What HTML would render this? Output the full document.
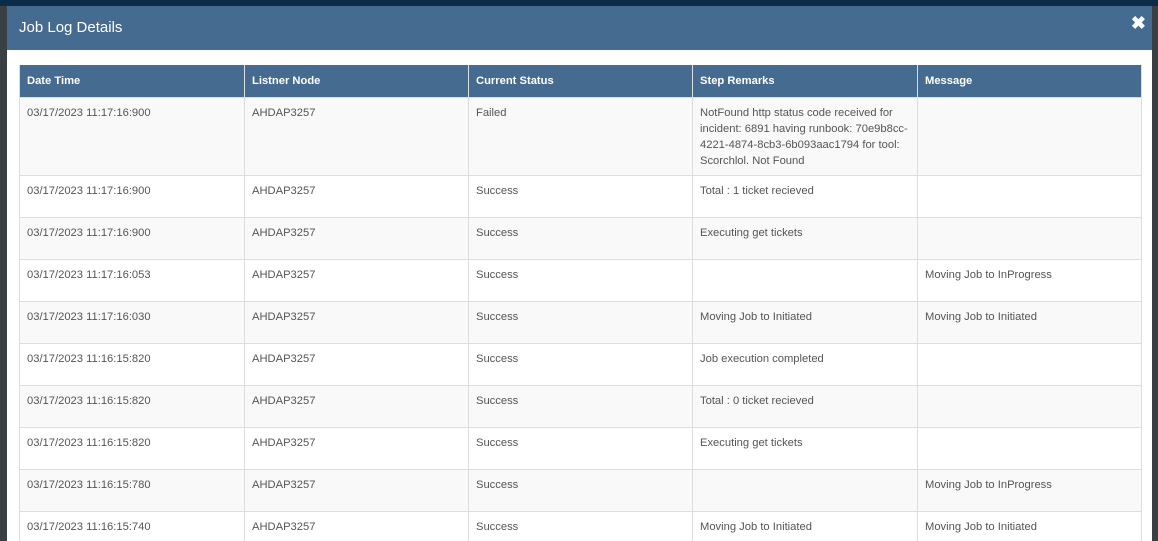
<!DOCTYPE html>
<html><head><style>
html,body{margin:0;padding:0;width:1158px;height:541px;overflow:hidden;background:#3a3f44;font-family:"Liberation Sans",Arial,sans-serif;}
.topbar{position:absolute;left:0;top:0;width:1158px;height:6px;background:#0c2b48;}
.modal{position:absolute;left:7px;top:6px;width:1145px;height:535px;overflow:hidden;background:#fff;}
.hdr{height:44px;background:#466b90;color:#fff;font-size:15px;line-height:44px;padding-left:12px;position:relative;}
.x{position:absolute;right:6px;top:0;font-size:18px;font-weight:bold;line-height:34px;}
table{position:absolute;left:12px;top:59px;width:1122px;border-collapse:collapse;table-layout:fixed;font-size:11.2px;color:#555;}
th{background:#466b90;color:#fff;text-align:left;font-weight:bold;height:32px;padding:0 7px;border-left:1px solid #ddd;border-right:1px solid #ddd;}
td{vertical-align:top;padding:7px 7px 0 7px;line-height:16px;border:1px solid #ddd;height:34px;box-sizing:content-box;}
tr.o td{background:#f9f9f9;}
tr.first td{height:70px;}
</style></head><body>
<div class="topbar"></div>
<div class="modal">
<div class="hdr">Job Log Details<span class="x">✖</span></div>
<table>
<colgroup><col style="width:225px"><col style="width:224px"><col style="width:224px"><col style="width:225px"><col style="width:224px"></colgroup>
<tr><th>Date Time</th><th>Listner Node</th><th>Current Status</th><th>Step Remarks</th><th>Message</th></tr>
<tr class="o first"><td>03/17/2023 11:17:16:900</td><td>AHDAP3257</td><td>Failed</td><td>NotFound http status code received for incident: 6891 having runbook: 70e9b8cc-4221-4874-8cb3-6b093aac1794 for tool: Scorchlol. Not Found</td><td></td></tr>
<tr><td>03/17/2023 11:17:16:900</td><td>AHDAP3257</td><td>Success</td><td>Total : 1 ticket recieved</td><td></td></tr>
<tr class="o"><td>03/17/2023 11:17:16:900</td><td>AHDAP3257</td><td>Success</td><td>Executing get tickets</td><td></td></tr>
<tr><td>03/17/2023 11:17:16:053</td><td>AHDAP3257</td><td>Success</td><td></td><td>Moving Job to InProgress</td></tr>
<tr class="o"><td>03/17/2023 11:17:16:030</td><td>AHDAP3257</td><td>Success</td><td>Moving Job to Initiated</td><td>Moving Job to Initiated</td></tr>
<tr><td>03/17/2023 11:16:15:820</td><td>AHDAP3257</td><td>Success</td><td>Job execution completed</td><td></td></tr>
<tr class="o"><td>03/17/2023 11:16:15:820</td><td>AHDAP3257</td><td>Success</td><td>Total : 0 ticket recieved</td><td></td></tr>
<tr><td>03/17/2023 11:16:15:820</td><td>AHDAP3257</td><td>Success</td><td>Executing get tickets</td><td></td></tr>
<tr class="o"><td>03/17/2023 11:16:15:780</td><td>AHDAP3257</td><td>Success</td><td></td><td>Moving Job to InProgress</td></tr>
<tr><td>03/17/2023 11:16:15:740</td><td>AHDAP3257</td><td>Success</td><td>Moving Job to Initiated</td><td>Moving Job to Initiated</td></tr>
</table>
</div>
</body></html>
